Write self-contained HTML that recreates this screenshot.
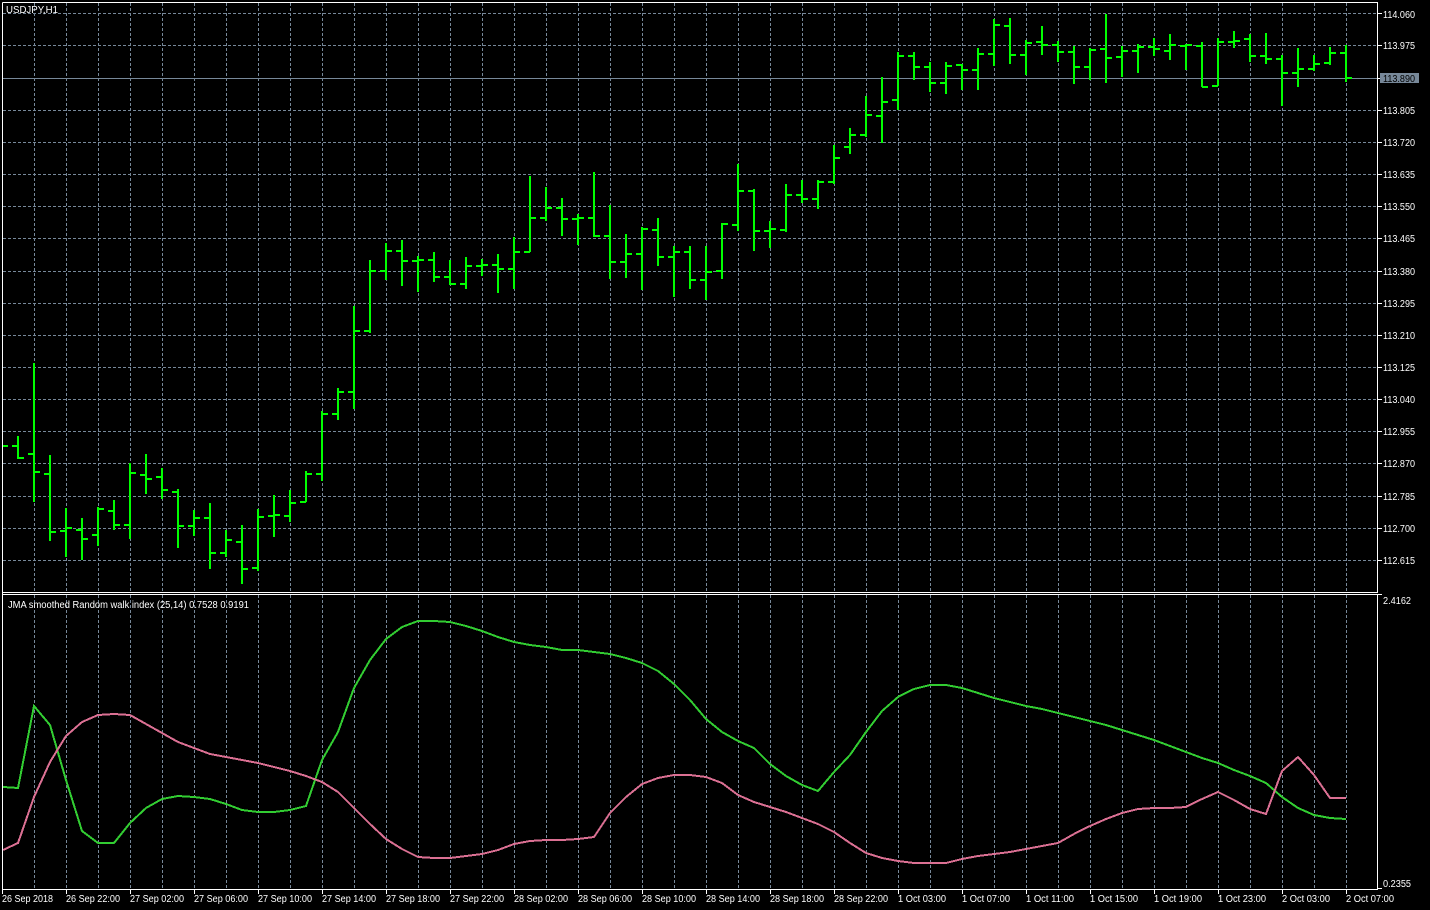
<!DOCTYPE html>
<html><head><meta charset="utf-8"><title>USDJPY,H1</title>
<style>
html,body{margin:0;padding:0;background:#000;width:1430px;height:910px;overflow:hidden}
svg{display:block}
text{font-family:"Liberation Sans",sans-serif;font-size:10px;fill:#fff}
.c{shape-rendering:crispEdges}
</style></head><body>
<svg width="1430" height="910" viewBox="0 0 1430 910" xmlns="http://www.w3.org/2000/svg">
<rect width="1430" height="910" fill="#000"/>
<!-- grid -->
<path fill="none" stroke="#778899" stroke-width="1" stroke-dasharray="3 2" d="M3 13.5H1377M3 45.5H1377M3 110.5H1377M3 142.5H1377M3 174.5H1377M3 206.5H1377M3 238.5H1377M3 271.5H1377M3 303.5H1377M3 335.5H1377M3 367.5H1377M3 399.5H1377M3 431.5H1377M3 463.5H1377M3 496.5H1377M3 528.5H1377M3 560.5H1377
M34.5 3V592M66.5 3V592M98.5 3V592M130.5 3V592M162.5 3V592M194.5 3V592M226.5 3V592M258.5 3V592M290.5 3V592M322.5 3V592M354.5 3V592M386.5 3V592M418.5 3V592M450.5 3V592M482.5 3V592M514.5 3V592M546.5 3V592M578.5 3V592M610.5 3V592M642.5 3V592M674.5 3V592M706.5 3V592M738.5 3V592M770.5 3V592M802.5 3V592M834.5 3V592M866.5 3V592M898.5 3V592M930.5 3V592M962.5 3V592M994.5 3V592M1026.5 3V592M1058.5 3V592M1090.5 3V592M1122.5 3V592M1154.5 3V592M1186.5 3V592M1218.5 3V592M1250.5 3V592M1282.5 3V592M1314.5 3V592M1346.5 3V592
M34.5 595V889M66.5 595V889M98.5 595V889M130.5 595V889M162.5 595V889M194.5 595V889M226.5 595V889M258.5 595V889M290.5 595V889M322.5 595V889M354.5 595V889M386.5 595V889M418.5 595V889M450.5 595V889M482.5 595V889M514.5 595V889M546.5 595V889M578.5 595V889M610.5 595V889M642.5 595V889M674.5 595V889M706.5 595V889M738.5 595V889M770.5 595V889M802.5 595V889M834.5 595V889M866.5 595V889M898.5 595V889M930.5 595V889M962.5 595V889M994.5 595V889M1026.5 595V889M1058.5 595V889M1090.5 595V889M1122.5 595V889M1154.5 595V889M1186.5 595V889M1218.5 595V889M1250.5 595V889M1282.5 595V889M1314.5 595V889M1346.5 595V889"/>
<path fill="none" stroke="#778899" d="M3 78.5H1377"/>
<!-- bars -->
<path fill="none" stroke="#00ff00" stroke-width="2" d="M3 446H8
M18 436V459M12 446H18M18 458H24
M34 363V502M28 454H34M34 472H40
M50 455V541M44 474H50M50 532H56
M66 508V557M60 531H66M66 528H72
M82 518V560M76 530H82M82 539H88
M98 507V546M92 535H98M98 509H104
M114 500V530M108 511H114M114 525H120
M130 463V539M124 525H130M130 473H136
M146 454V494M140 475H146M146 479H152
M162 468V499M156 477H162M162 490H168
M178 489V548M172 492H178M178 526H184
M194 510V536M188 526H194M194 518H200
M210 503V569M204 518H210M210 553H216
M226 530V557M220 553H226M226 540H232
M242 525V584M236 542H242M242 569H248
M258 509V571M252 568H258M258 517H264
M274 495V537M268 516H274M274 515H280
M290 490V522M284 516H290M290 503H296
M306 471V502M300 502H306M306 474H312
M322 411V481M316 474H322M322 414H328
M338 388V420M332 414H338M338 392H344
M354 306V409M348 392H354M354 331H360
M370 260V333M364 331H370M370 271H376
M386 243V280M380 271H386M386 251H392
M402 240V286M396 251H402M402 261H408
M418 256V292M412 261H418M418 260H424
M434 252V282M428 260H434M434 277H440
M450 260V285M444 277H450M450 284H456
M466 257V289M460 284H466M466 266H472
M482 259V276M476 266H482M482 265H488
M498 254V293M492 265H498M498 269H504
M514 237V289M508 269H514M514 252H520
M530 176V252M524 252H530M530 218H536
M546 187V221M540 218H546M546 208H552
M562 198V236M556 208H562M562 219H568
M578 214V245M572 219H578M578 218H584
M594 172V237M588 218H594M594 236H600
M610 205V279M604 236H610M610 262H616
M626 234V278M620 262H626M626 254H632
M642 227V290M636 254H642M642 229H648
M658 218V266M652 230H658M658 257H664
M674 246V297M668 257H674M674 252H680
M690 246V289M684 252H690M690 280H696
M706 246V300M700 280H706M706 272H712
M722 223V279M716 271H722M722 224H728
M738 164V231M732 225H738M738 191H744
M754 189V251M748 191H754M754 231H760
M770 221V248M764 231H770M770 229H776
M786 184V232M780 230H786M786 195H792
M802 180V203M796 195H802M802 199H808
M818 180V209M812 199H818M818 182H824
M834 145V184M828 182H834M834 158H840
M850 128V154M844 147H850M850 135H856
M866 96V137M860 135H866M866 115H872
M882 77V143M876 116H882M882 102H888
M898 52V110M892 100H898M898 56H904
M914 52V80M908 56H914M914 67H920
M930 62V92M924 67H930M930 83H936
M946 62V94M940 83H946M946 66H952
M962 64V90M956 65H962M962 70H968
M978 48V90M972 70H978M978 54H984
M994 19V66M988 54H994M994 25H1000
M1010 18V64M1004 26H1010M1010 55H1016
M1026 40V75M1020 55H1026M1026 43H1032
M1042 26V55M1036 42H1042M1042 45H1048
M1058 41V62M1052 45H1058M1058 52H1064
M1074 46V84M1068 52H1074M1074 67H1080
M1090 48V80M1084 67H1090M1090 50H1096
M1106 14V83M1100 49H1106M1106 58H1112
M1122 46V77M1116 57H1122M1122 51H1128
M1138 44V73M1132 51H1138M1138 47H1144
M1154 38V56M1148 47H1154M1154 49H1160
M1170 34V60M1164 51H1170M1170 45H1176
M1186 44V70M1180 46H1186M1186 45H1192
M1202 42V87M1196 46H1202M1202 87H1208
M1218 38V86M1212 86H1218M1218 42H1224
M1234 31V48M1228 42H1234M1234 41H1240
M1250 34V62M1244 39H1250M1250 56H1256
M1266 33V64M1260 56H1266M1266 59H1272
M1282 55V106M1276 59H1282M1282 73H1288
M1298 48V87M1292 73H1298M1298 69H1304
M1314 55V71M1308 69H1314M1314 64H1320
M1330 47V65M1324 63H1330M1330 53H1336
M1346 45V82M1340 53H1346M1346 78H1352"/>
<!-- indicator lines -->
<polyline class="c" fill="none" stroke="#32cd32" stroke-width="2" points="3,787 18,788 34,706 50,725 66,780 82,831 98,843 114,843 130,823 146,808 162,799 178,796 194,797 210,799 226,804 242,810 258,812 274,812 290,810 306,806 322,760 338,732 354,688 370,660 386,639 402,627 418,621 434,621 450,622 466,626 482,631 498,637 514,642 530,645 546,647 562,650 578,650 594,652 610,654 626,658 642,663 658,671 674,684 690,700 706,719 722,732 738,741 754,748 770,764 786,776 802,785 818,791 834,772 850,755 866,732 882,711 898,697 914,689 930,685 946,685 962,688 978,693 994,698 1010,702 1026,706 1042,709 1058,713 1074,717 1090,721 1106,725 1122,730 1138,735 1154,740 1170,746 1186,752 1202,758 1218,763 1234,770 1250,776 1266,783 1282,797 1298,808 1314,815 1330,818 1346,819"/>
<polyline class="c" fill="none" stroke="#db7093" stroke-width="2" points="3,850 18,843 34,797 50,762 66,736 82,722 98,715 114,714 130,715 146,724 162,733 178,742 194,748 210,754 226,757 242,760 258,763 274,767 290,771 306,776 322,782 338,792 354,808 370,824 386,839 402,849 418,857 434,858 450,858 466,856 482,854 498,850 514,844 530,841 546,840 562,840 578,839 594,837 610,813 626,797 642,784 658,778 674,775 690,775 706,777 722,783 738,795 754,802 770,807 786,812 802,818 818,824 834,832 850,843 866,853 882,858 898,861 914,863 930,863 946,863 962,859 978,856 994,854 1010,852 1026,849 1042,846 1058,843 1074,834 1090,826 1106,819 1122,813 1138,809 1154,808 1170,808 1186,807 1202,799 1218,792 1234,800 1250,809 1266,814 1282,771 1298,757 1314,775 1330,798 1346,798"/>
<!-- frames and axis ticks -->
<path fill="none" stroke="#fff" stroke-width="1" d="M2.5 2.5V889.5M2.5 2.5H1377.5V592.5H2.5M2.5 594.5H1377.5V889.5H2.5
M1377 13.5H1382M1377 45.5H1382M1377 78.5H1382M1377 110.5H1382M1377 142.5H1382M1377 174.5H1382M1377 206.5H1382M1377 238.5H1382M1377 271.5H1382M1377 303.5H1382M1377 335.5H1382M1377 367.5H1382M1377 399.5H1382M1377 431.5H1382M1377 463.5H1382M1377 496.5H1382M1377 528.5H1382M1377 560.5H1382M1377 594.5H1382M1377 888.5H1382
M2.5 889V894M66.5 889V894M130.5 889V894M194.5 889V894M258.5 889V894M322.5 889V894M386.5 889V894M450.5 889V894M514.5 889V894M578.5 889V894M642.5 889V894M706.5 889V894M770.5 889V894M834.5 889V894M898.5 889V894M962.5 889V894M1026.5 889V894M1090.5 889V894M1154.5 889V894M1218.5 889V894M1282.5 889V894M1346.5 889V894"/>
<rect x="1380" y="73" width="39" height="10" fill="#778899"/>
<!-- texts -->
<text x="6" y="13" textLength="52" lengthAdjust="spacingAndGlyphs">USDJPY,H1</text>
<text x="8" y="608" textLength="241" lengthAdjust="spacingAndGlyphs">JMA smoothed Random walk index (25,14) 0.7528 0.9191</text>
<g>
<text x="1383" y="18" textLength="32" lengthAdjust="spacingAndGlyphs">114.060</text>
<text x="1383" y="49" textLength="32" lengthAdjust="spacingAndGlyphs">113.975</text>
<text x="1383" y="82" textLength="32" lengthAdjust="spacingAndGlyphs" style="fill:#000">113.890</text>
<text x="1383" y="114" textLength="32" lengthAdjust="spacingAndGlyphs">113.805</text>
<text x="1383" y="146" textLength="32" lengthAdjust="spacingAndGlyphs">113.720</text>
<text x="1383" y="178" textLength="32" lengthAdjust="spacingAndGlyphs">113.635</text>
<text x="1383" y="210" textLength="32" lengthAdjust="spacingAndGlyphs">113.550</text>
<text x="1383" y="242" textLength="32" lengthAdjust="spacingAndGlyphs">113.465</text>
<text x="1383" y="275" textLength="32" lengthAdjust="spacingAndGlyphs">113.380</text>
<text x="1383" y="307" textLength="32" lengthAdjust="spacingAndGlyphs">113.295</text>
<text x="1383" y="339" textLength="32" lengthAdjust="spacingAndGlyphs">113.210</text>
<text x="1383" y="371" textLength="32" lengthAdjust="spacingAndGlyphs">113.125</text>
<text x="1383" y="403" textLength="32" lengthAdjust="spacingAndGlyphs">113.040</text>
<text x="1383" y="435" textLength="32" lengthAdjust="spacingAndGlyphs">112.955</text>
<text x="1383" y="467" textLength="32" lengthAdjust="spacingAndGlyphs">112.870</text>
<text x="1383" y="500" textLength="32" lengthAdjust="spacingAndGlyphs">112.785</text>
<text x="1383" y="532" textLength="32" lengthAdjust="spacingAndGlyphs">112.700</text>
<text x="1383" y="564" textLength="32" lengthAdjust="spacingAndGlyphs">112.615</text>
<text x="1383" y="604" textLength="28" lengthAdjust="spacingAndGlyphs">2.4162</text>
<text x="1383" y="887" textLength="28" lengthAdjust="spacingAndGlyphs">0.2355</text>
</g>
<g>
<text x="2" y="902" textLength="51" lengthAdjust="spacingAndGlyphs">26 Sep 2018</text>
<text x="66" y="902" textLength="54" lengthAdjust="spacingAndGlyphs">26 Sep 22:00</text>
<text x="130" y="902" textLength="54" lengthAdjust="spacingAndGlyphs">27 Sep 02:00</text>
<text x="194" y="902" textLength="54" lengthAdjust="spacingAndGlyphs">27 Sep 06:00</text>
<text x="258" y="902" textLength="54" lengthAdjust="spacingAndGlyphs">27 Sep 10:00</text>
<text x="322" y="902" textLength="54" lengthAdjust="spacingAndGlyphs">27 Sep 14:00</text>
<text x="386" y="902" textLength="54" lengthAdjust="spacingAndGlyphs">27 Sep 18:00</text>
<text x="450" y="902" textLength="54" lengthAdjust="spacingAndGlyphs">27 Sep 22:00</text>
<text x="514" y="902" textLength="54" lengthAdjust="spacingAndGlyphs">28 Sep 02:00</text>
<text x="578" y="902" textLength="54" lengthAdjust="spacingAndGlyphs">28 Sep 06:00</text>
<text x="642" y="902" textLength="54" lengthAdjust="spacingAndGlyphs">28 Sep 10:00</text>
<text x="706" y="902" textLength="54" lengthAdjust="spacingAndGlyphs">28 Sep 14:00</text>
<text x="770" y="902" textLength="54" lengthAdjust="spacingAndGlyphs">28 Sep 18:00</text>
<text x="834" y="902" textLength="54" lengthAdjust="spacingAndGlyphs">28 Sep 22:00</text>
<text x="898" y="902" textLength="48" lengthAdjust="spacingAndGlyphs">1 Oct 03:00</text>
<text x="962" y="902" textLength="48" lengthAdjust="spacingAndGlyphs">1 Oct 07:00</text>
<text x="1026" y="902" textLength="48" lengthAdjust="spacingAndGlyphs">1 Oct 11:00</text>
<text x="1090" y="902" textLength="48" lengthAdjust="spacingAndGlyphs">1 Oct 15:00</text>
<text x="1154" y="902" textLength="48" lengthAdjust="spacingAndGlyphs">1 Oct 19:00</text>
<text x="1218" y="902" textLength="48" lengthAdjust="spacingAndGlyphs">1 Oct 23:00</text>
<text x="1282" y="902" textLength="48" lengthAdjust="spacingAndGlyphs">2 Oct 03:00</text>
<text x="1346" y="902" textLength="48" lengthAdjust="spacingAndGlyphs">2 Oct 07:00</text>
</g>
</svg>
</body></html>
